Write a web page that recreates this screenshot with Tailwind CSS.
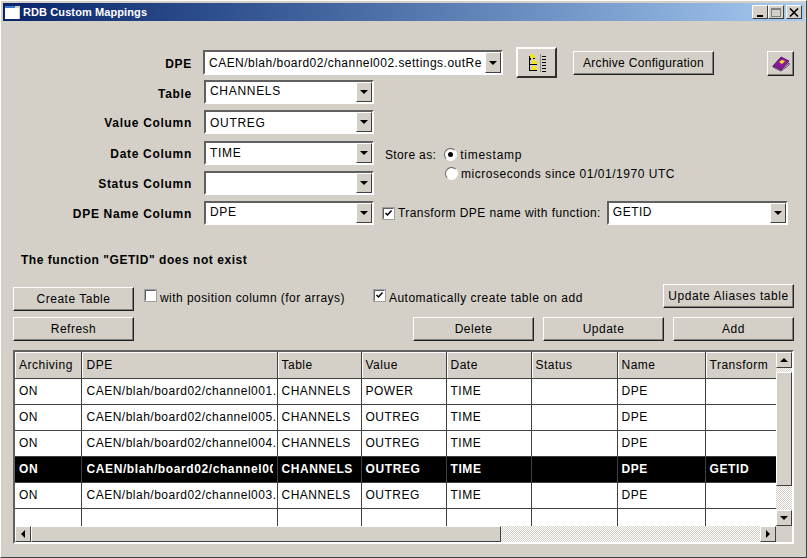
<!DOCTYPE html>
<html lang="en">
<head>
  <meta charset="UTF-8">
  <title>RDB Custom Mappings</title>
  <script src="https://cdn.jsdelivr.net/npm/@tailwindcss/browser@4"></script>
</head>
<body class="w-[807px] h-[558px] overflow-hidden bg-[#d4d0c8] font-['Liberation_Sans',Arial,sans-serif] text-[12px] text-black">
<div class="w-[807px] h-[558px] flex flex-col border-t-1 border-l-1 border-t-[#ffffff] border-l-[#ffffff] border-r-1 border-b-1 border-r-[#404040] border-b-[#404040] px-[2px] pt-[2px]">

  <!-- title bar -->
  <div class="h-[18px] shrink-0 flex items-center pl-[2px] pr-[2px] bg-gradient-to-r from-[#0a246a] to-[#a6caf0]">
    <svg width="15" height="13" viewBox="0 0 15 13" class="shrink-0"><rect width="15" height="13" fill="#fff"/><rect width="15" height="2" fill="#3a7ad0"/><rect x="10" y="0" width="5" height="2" fill="#d4d0c8"/><rect x="14" y="2" width="1" height="11" fill="#d4d0c8"/></svg>
    <span class="ml-[3px] text-white font-bold text-[11px] tracking-[0.1px] leading-none">RDB Custom Mappings</span>
    <div class="ml-auto flex">
      <div class="w-[16px] h-[14px] bg-[#d4d0c8] border border-t-white border-l-white border-r-[#404040] border-b-[#404040] flex items-end justify-center pb-[1px]"><div class="w-[6px] h-[2px] bg-black"></div></div>
      <div class="w-[16px] h-[14px] bg-[#d4d0c8] border border-t-white border-l-white border-r-[#404040] border-b-[#404040] flex items-center justify-center"><div class="w-[10px] h-[9px] border border-t-2 border-[#808080]"></div></div>
      <div class="ml-[2px] w-[16px] h-[14px] bg-[#d4d0c8] border border-t-white border-l-white border-r-[#404040] border-b-[#404040] flex items-center justify-center">
        <svg width="10" height="9" viewBox="0 0 10 9"><path d="M1 0.5L9 8.5M9 0.5L1 8.5" stroke="#000" stroke-width="1.6"/></svg>
      </div>
    </div>
  </div>

  <!-- form -->
  <div class="flex-1 pl-[10px] pr-[10px] flex flex-col">

    <!-- DPE row -->
    <div class="flex items-start h-[58px] pt-[26px]">
      <label class="w-[179px] text-right font-bold tracking-[0.7px] mt-[8px]">DPE</label>
      <div class="ml-[11px] w-[300px] h-[25px] flex items-center bg-white border-2 border-t-[#606060] border-l-[#606060] border-r-white border-b-white mt-[3px]">
        <span class="flex-1 pl-[4px] overflow-hidden whitespace-nowrap tracking-[0.48px]">CAEN/blah/board02/channel002.settings.outRe</span>
        <span class="w-[16px] h-full bg-[#d4d0c8] border border-t-white border-l-white border-r-[#404040] border-b-[#404040] flex items-center justify-center"><span class="border-x-[4px] border-x-transparent border-t-[4px] border-t-black"></span></span>
      </div>
      <button class="ml-[13px] w-[41px] h-[31px] flex items-center justify-center bg-[#d4d0c8] border-2 border-t-white border-l-white border-r-[#303030] border-b-[#303030]">
        <svg width="18" height="18" viewBox="0 0 18 18" shape-rendering="crispEdges"><path d="M1 0h1v6h1v-2h1v-1h3v2h-2v-1zM1 0v17h8v-1H2v-5h7v-1H2V6h1" fill="#000"/><path d="M2 0h2l2 2h1v2H2zM4 6h2l2 2h1v2H4zM4 12h2l2 2h1v2H4z" fill="#f4e410"/><path d="M12 0h1v18h-1z" fill="#909090"/><path d="M14 2h4v1h-4zM14 5h4v1h-4zM14 8h4v1h-4zM14 11h4v1h-4zM14 14h4v1h-4zM14 17h4v1h-4z" fill="#000"/></svg>
      </button>
      <button class="ml-[16px] mt-[4px] w-[141px] h-[24px] bg-[#d4d0c8] border border-t-white border-l-white border-r-[#202020] border-b-[#202020] shadow-[inset_-1px_-1px_0_#808080] tracking-[0.3px]">Archive Configuration</button>
      <button class="ml-[53px] mt-[4px] w-[27px] h-[25px] flex items-center justify-center bg-[#d4d0c8] border border-t-white border-l-white border-r-[#202020] border-b-[#202020] shadow-[inset_-1px_-1px_0_#808080]">
        <svg width="18" height="16" viewBox="0 0 18 16"><path d="M1 10L9 1l8 4-8 9z" fill="#8a1a9a" stroke="#3a0a50" stroke-width="0.8"/><path d="M1 10l8 4 8-7v2l-8 6-8-4z" fill="#fff" stroke="#3a0a50" stroke-width="0.8"/><path d="M7 6l3-2 3 1-3 3z" fill="#f4e81a"/></svg>
      </button>
    </div>

    <!-- lower rows -->
    <div class="flex flex-col gap-[6.25px] mt-[1px]">
      <div class="flex items-center h-[24px]">
        <label class="w-[179px] text-right font-bold tracking-[0.7px] mt-[3px]">Table</label>
        <div class="ml-[12px] w-[170px] h-[24px] flex items-center bg-white border-2 border-t-[#606060] border-l-[#606060] border-r-white border-b-white">
          <span class="flex-1 pl-[4px] pb-[2px] tracking-[0.7px]">CHANNELS</span>
          <span class="w-[16px] h-full bg-[#d4d0c8] border border-t-white border-l-white border-r-[#404040] border-b-[#404040] flex items-center justify-center"><span class="border-x-[4px] border-x-transparent border-t-[4px] border-t-black"></span></span>
        </div>
      </div>
      <div class="flex items-center h-[24px]">
        <label class="w-[179px] text-right font-bold tracking-[0.7px] mt-[1px]">Value Column</label>
        <div class="ml-[12px] w-[170px] h-[24px] flex items-center bg-white border-2 border-t-[#606060] border-l-[#606060] border-r-white border-b-white">
          <span class="flex-1 pl-[4px] pt-[2px] tracking-[0.7px]">OUTREG</span>
          <span class="w-[16px] h-full bg-[#d4d0c8] border border-t-white border-l-white border-r-[#404040] border-b-[#404040] flex items-center justify-center"><span class="border-x-[4px] border-x-transparent border-t-[4px] border-t-black"></span></span>
        </div>
      </div>
      <div class="flex items-center h-[24px]">
        <label class="w-[179px] text-right font-bold tracking-[0.7px] mt-[2px]">Date Column</label>
        <div class="ml-[12px] w-[170px] h-[24px] flex items-center bg-white border-2 border-t-[#606060] border-l-[#606060] border-r-white border-b-white">
          <span class="flex-1 pl-[4px] tracking-[0.7px]">TIME</span>
          <span class="w-[16px] h-full bg-[#d4d0c8] border border-t-white border-l-white border-r-[#404040] border-b-[#404040] flex items-center justify-center"><span class="border-x-[4px] border-x-transparent border-t-[4px] border-t-black"></span></span>
        </div>
        <span class="ml-[11px] mt-[4px] tracking-[0.35px]">Store as:</span>
        <span class="ml-[8px] mt-[4px] w-[13px] h-[13px] rounded-full bg-white border border-[#606060] border-b-white border-r-white flex items-center justify-center"><span class="w-[5px] h-[5px] rounded-full bg-black"></span></span>
        <span class="ml-[3px] mt-[4px] tracking-[0.75px]">timestamp</span>
      </div>
      <div class="flex items-center h-[24px]">
        <label class="w-[179px] text-right font-bold tracking-[0.7px] mt-[2px]">Status Column</label>
        <div class="ml-[12px] w-[170px] h-[24px] flex items-center bg-white border-2 border-t-[#606060] border-l-[#606060] border-r-white border-b-white">
          <span class="flex-1"></span>
          <span class="w-[16px] h-full bg-[#d4d0c8] border border-t-white border-l-white border-r-[#404040] border-b-[#404040] flex items-center justify-center"><span class="border-x-[4px] border-x-transparent border-t-[4px] border-t-black"></span></span>
        </div>
        <span class="ml-[71px] mt-[-18px] w-[13px] h-[13px] rounded-full bg-white border border-[#606060] border-b-white border-r-white"></span>
        <span class="ml-[3px] mt-[-18px] tracking-[0.52px]">microseconds since 01/01/1970 UTC</span>
      </div>
      <div class="flex items-center h-[24px]">
        <label class="w-[179px] text-right font-bold tracking-[0.7px] mt-[1px]">DPE Name Column</label>
        <div class="ml-[12px] w-[170px] h-[24px] flex items-center bg-white border-2 border-t-[#606060] border-l-[#606060] border-r-white border-b-white">
          <span class="flex-1 pl-[4px] pb-[2px] tracking-[0.7px]">DPE</span>
          <span class="w-[16px] h-full bg-[#d4d0c8] border border-t-white border-l-white border-r-[#404040] border-b-[#404040] flex items-center justify-center"><span class="border-x-[4px] border-x-transparent border-t-[4px] border-t-black"></span></span>
        </div>
        <span class="ml-[9px] w-[11px] h-[11px] flex items-center justify-center bg-white border border-t-[#606060] border-l-[#606060] border-r-white border-b-white outline-1 outline-[#a0a0a0]">
          <svg width="9" height="9" viewBox="0 0 9 9"><path d="M1.5 4l2 2 4-4.5" stroke="#000" stroke-width="1.5" fill="none"/></svg>
        </span>
        <span class="ml-[4px] tracking-[0.42px]">Transform DPE name with function:</span>
        <div class="ml-[6px] w-[181px] h-[24px] flex items-center bg-white border-2 border-t-[#606060] border-l-[#606060] border-r-white border-b-white">
          <span class="flex-1 pl-[4px] pb-[2px] tracking-[0.5px]">GETID</span>
          <span class="w-[16px] h-full bg-[#d4d0c8] border border-t-white border-l-white border-r-[#404040] border-b-[#404040] flex items-center justify-center"><span class="border-x-[4px] border-x-transparent border-t-[4px] border-t-black"></span></span>
        </div>
      </div>
    </div>

    <div class="mt-[28px] pl-[8px] h-[14px] leading-[14px] font-bold tracking-[0.54px]">The function "GETID" does not exist</div>

    <!-- action rows -->
    <div class="mt-[17px] flex items-start h-[33px]">
      <button class="mt-[3px] w-[121px] h-[24px] bg-[#d4d0c8] border border-t-white border-l-white border-r-[#202020] border-b-[#202020] shadow-[inset_-1px_-1px_0_#808080] tracking-[0.5px]">Create Table</button>
      <span class="ml-[11px] mt-[6px] w-[11px] h-[11px] bg-white border border-t-[#606060] border-l-[#606060] border-r-white border-b-white outline-1 outline-[#a0a0a0]"></span>
      <span class="ml-[4px] mt-[5px] tracking-[0.45px]">with position column (for arrays)</span>
      <span class="ml-[29px] mt-[6px] w-[11px] h-[11px] flex items-center justify-center bg-white border border-t-[#606060] border-l-[#606060] border-r-white border-b-white outline-1 outline-[#a0a0a0]">
        <svg width="9" height="9" viewBox="0 0 9 9"><path d="M1.5 4l2 2 4-4.5" stroke="#000" stroke-width="1.5" fill="none"/></svg>
      </span>
      <span class="ml-[4px] mt-[5px] tracking-[0.5px]">Automatically create table on add</span>
      <button class="ml-auto w-[131px] h-[24px] bg-[#d4d0c8] border border-t-white border-l-white border-r-[#202020] border-b-[#202020] shadow-[inset_-1px_-1px_0_#808080] tracking-[0.55px]">Update Aliases table</button>
    </div>
    <div class="flex h-[24px] tracking-[0.5px]">
      <button class="w-[121px] bg-[#d4d0c8] border border-t-white border-l-white border-r-[#202020] border-b-[#202020] shadow-[inset_-1px_-1px_0_#808080]">Refresh</button>
      <button class="ml-[279px] w-[121px] bg-[#d4d0c8] border border-t-white border-l-white border-r-[#202020] border-b-[#202020] shadow-[inset_-1px_-1px_0_#808080]">Delete</button>
      <button class="ml-[9px] w-[121px] bg-[#d4d0c8] border border-t-white border-l-white border-r-[#202020] border-b-[#202020] shadow-[inset_-1px_-1px_0_#808080]">Update</button>
      <button class="ml-[9px] w-[121px] bg-[#d4d0c8] border border-t-white border-l-white border-r-[#202020] border-b-[#202020] shadow-[inset_-1px_-1px_0_#808080]">Add</button>
    </div>

    <!-- table -->
    <div class="mt-[9px] w-[781px] h-[194px] border-2 border-t-[#606060] border-l-[#606060] border-r-white border-b-white flex flex-col">
      <div class="flex h-[174px]">
        <div class="w-[761px] h-[174px] overflow-hidden bg-white">
          <table class="table-fixed border-collapse w-[761px] tracking-[0.5px]">
            <colgroup>
              <col class="w-[66px]"><col class="w-[196px]"><col class="w-[84px]"><col class="w-[85px]"><col class="w-[85px]"><col class="w-[86px]"><col class="w-[88px]"><col class="w-[71px]">
            </colgroup>
            <thead>
              <tr class="h-[26px] bg-[#d4d0c8]">
                <th class="px-[4px] pt-[1px] font-normal text-left border-r border-b border-[#404040] shadow-[inset_1px_1px_0_#fff]">Archiving</th>
                <th class="pl-[5px] pt-[1px] font-normal text-left border-r border-b border-[#404040] shadow-[inset_1px_1px_0_#fff]">DPE</th>
                <th class="px-[4px] pt-[1px] font-normal text-left border-r border-b border-[#404040] shadow-[inset_1px_1px_0_#fff]">Table</th>
                <th class="px-[4px] pt-[1px] font-normal text-left border-r border-b border-[#404040] shadow-[inset_1px_1px_0_#fff]">Value</th>
                <th class="px-[4px] pt-[1px] font-normal text-left border-r border-b border-[#404040] shadow-[inset_1px_1px_0_#fff]">Date</th>
                <th class="px-[4px] pt-[1px] font-normal text-left border-r border-b border-[#404040] shadow-[inset_1px_1px_0_#fff]">Status</th>
                <th class="px-[4px] pt-[1px] font-normal text-left border-r border-b border-[#404040] shadow-[inset_1px_1px_0_#fff]">Name</th>
                <th class="px-[4px] pt-[1px] font-normal text-left border-b border-[#404040] shadow-[inset_1px_1px_0_#fff]">Transform</th>
              </tr>
            </thead>
            <tbody class="[&_td]:border-r [&_td]:border-b [&_td]:border-[#404040] [&_td]:px-[4px] [&_td]:overflow-hidden [&_td]:whitespace-nowrap [&_td:last-child]:border-r-0">
              <tr class="h-[26px]"><td>ON</td><td class="!pr-0 !pl-[5px]">CAEN/blah/board02/channel001.</td><td>CHANNELS</td><td>POWER</td><td>TIME</td><td></td><td>DPE</td><td></td></tr>
              <tr class="h-[26px]"><td>ON</td><td class="!pr-0 !pl-[5px]">CAEN/blah/board02/channel005.</td><td>CHANNELS</td><td>OUTREG</td><td>TIME</td><td></td><td>DPE</td><td></td></tr>
              <tr class="h-[26px]"><td>ON</td><td class="!pr-0 !pl-[5px]">CAEN/blah/board02/channel004.</td><td>CHANNELS</td><td>OUTREG</td><td>TIME</td><td></td><td>DPE</td><td></td></tr>
              <tr class="h-[26px] bg-black text-white font-bold tracking-[0.6px]"><td>ON</td><td class="!pr-0 !pl-[5px]"><div class="w-[186px] overflow-hidden">CAEN/blah/board02/channel002.</div></td><td>CHANNELS</td><td>OUTREG</td><td>TIME</td><td></td><td>DPE</td><td>GETID</td></tr>
              <tr class="h-[26px]"><td>ON</td><td class="!pr-0 !pl-[5px]">CAEN/blah/board02/channel003.</td><td>CHANNELS</td><td>OUTREG</td><td>TIME</td><td></td><td>DPE</td><td></td></tr>
              <tr class="h-[26px]"><td></td><td></td><td></td><td></td><td></td><td></td><td></td><td></td></tr>
            </tbody>
          </table>
        </div>
        <!-- vertical scrollbar -->
        <div class="w-[16px] h-[174px] flex flex-col bg-[repeating-conic-gradient(#fff_0_25%,#d4d0c8_0_50%)] bg-[length:2px_2px]">
          <div class="h-[16px] bg-[#d4d0c8] border border-t-white border-l-white border-r-[#404040] border-b-[#404040] flex items-center justify-center"><span class="border-x-[4px] border-x-transparent border-b-[4px] border-b-black"></span></div>
          <div class="mt-[4px] h-[114px] bg-[#d4d0c8] border border-t-white border-l-white border-r-[#404040] border-b-[#404040]"></div>
          <div class="mt-auto h-[16px] bg-[#d4d0c8] border border-t-white border-l-white border-r-[#404040] border-b-[#404040] flex items-center justify-center"><span class="border-x-[4px] border-x-transparent border-t-[4px] border-t-black"></span></div>
        </div>
      </div>
      <!-- horizontal scrollbar -->
      <div class="flex h-[16px]">
        <div class="w-[761px] flex bg-[repeating-conic-gradient(#fff_0_25%,#d4d0c8_0_50%)] bg-[length:2px_2px]">
          <div class="w-[16px] bg-[#d4d0c8] border border-t-white border-l-white border-r-[#404040] border-b-[#404040] flex items-center justify-center"><span class="border-y-[4px] border-y-transparent border-r-[4px] border-r-black"></span></div>
          <div class="w-[470px] bg-[#d4d0c8] border border-t-white border-l-white border-r-[#404040] border-b-[#404040]"></div>
          <div class="ml-auto w-[16px] bg-[#d4d0c8] border border-t-white border-l-white border-r-[#404040] border-b-[#404040] flex items-center justify-center"><span class="border-y-[4px] border-y-transparent border-l-[4px] border-l-black"></span></div>
        </div>
        <div class="w-[16px] bg-[#d4d0c8]"></div>
      </div>
    </div>
  </div>
</div>
</body>
</html>
